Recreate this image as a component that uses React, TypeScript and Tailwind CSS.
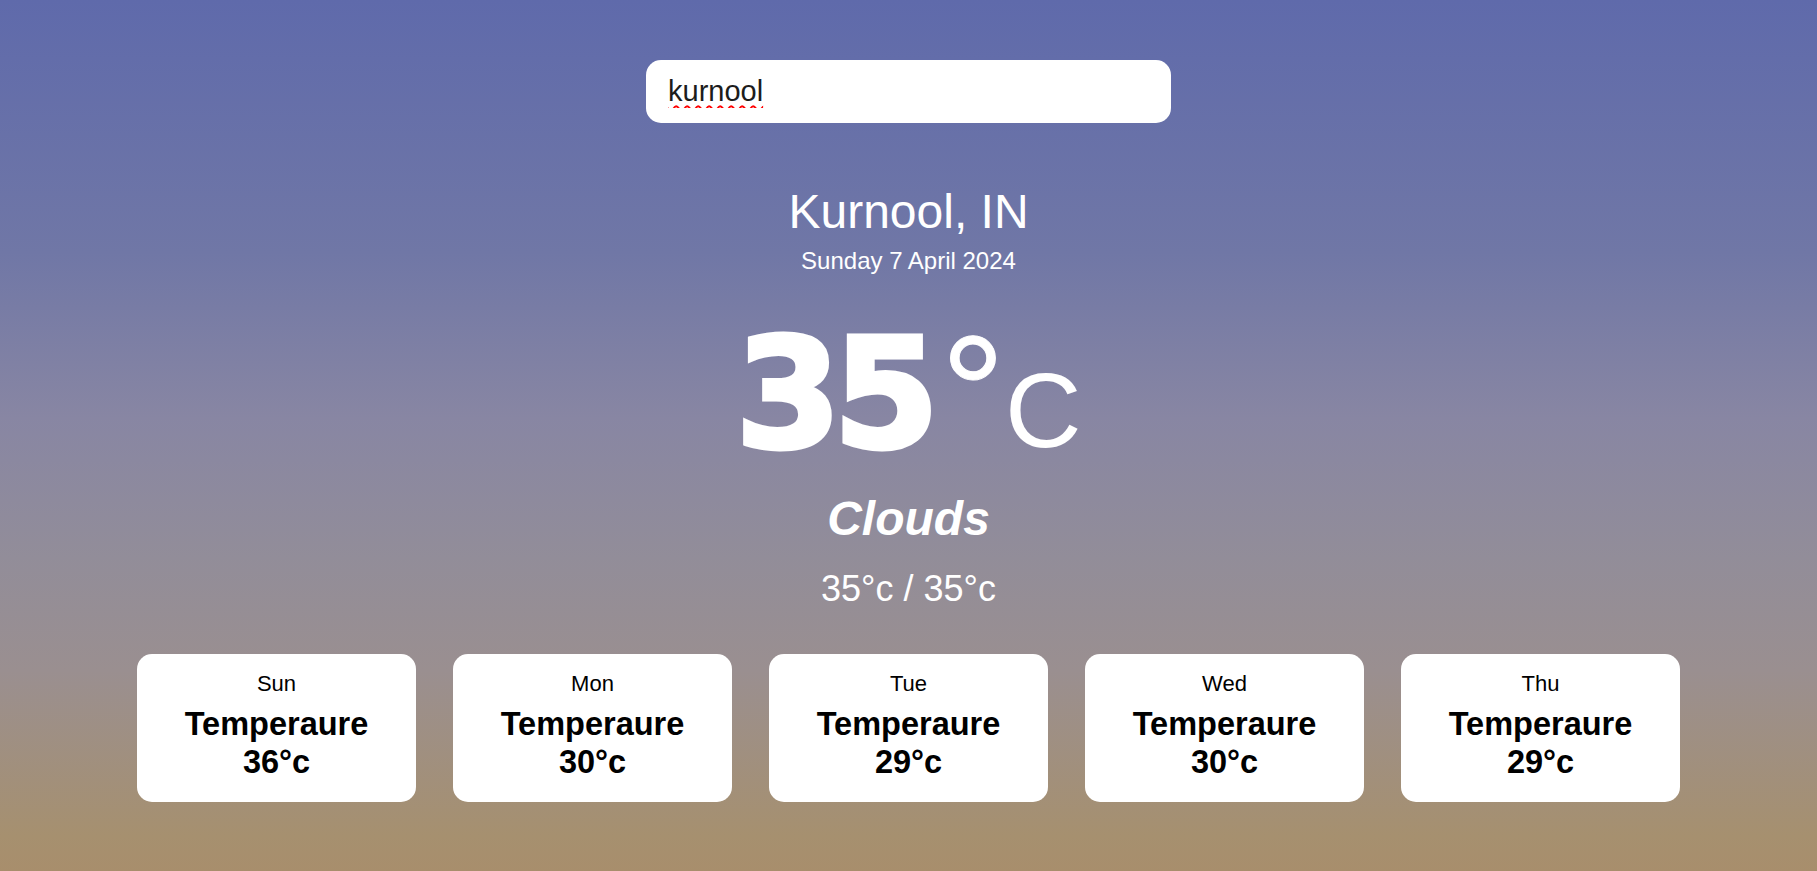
const forecast = [
  { day: "Sun", temp: 36 },
  { day: "Mon", temp: 30 },
  { day: "Tue", temp: 29 },
  { day: "Wed", temp: 30 },
  { day: "Thu", temp: 29 },
];

function ForecastCard({ day, temp }: { day: string; temp: number }) {
  return (
    <div className="flex h-[148px] w-[279px] flex-col items-center rounded-[15px] bg-white pt-[19px] text-black">
      <p className="text-[22px] leading-none">{day}</p>
      <p className="mt-[10px] text-center text-[32.5px] font-bold leading-[38px]">
        Temperaure
        <br />
        {temp}°c
      </p>
    </div>
  );
}

export default function App() {
  return (
    <div className="flex h-[871px] w-full flex-col items-center bg-[linear-gradient(180deg,#5f6aab_0%,#7077a6_29%,#8886a3_48%,#928d99_64%,#9a8f90_77%,#a6906f_96%,#a88e6c_100%)] pt-[60px] font-['Liberation_Sans',Arial,sans-serif] text-white">
      <input
        type="text"
        defaultValue="kurnool"
        className="h-[63px] w-[525px] rounded-[15px] bg-white px-[22px] text-[29px] text-[#1c1c1c] underline decoration-[#ff0000] decoration-wavy decoration-[1.5px] underline-offset-[4px] outline-none"
      />

      <h1 className="mt-[65px] text-[48px] leading-none">Kurnool, IN</h1>
      <p className="mt-[13px] text-[24px] leading-none">Sunday 7 April 2024</p>

      <div className="mt-[39px] flex items-baseline">
        <span className="font-['DejaVu_Sans',sans-serif] text-[152px] font-bold leading-none tracking-[-8px] [-webkit-text-stroke:5px_white]">35</span>
        <span className="ml-[10px] text-[160px] leading-none [-webkit-text-stroke:1px_white]">°</span>
        <span className="text-[106px] leading-none">C</span>
      </div>

      <p className="mt-[23px] text-[48px] font-bold italic leading-none">Clouds</p>
      <p className="mt-[28px] text-[36px] leading-none">35°c / 35°c</p>

      <div className="mt-[47px] flex gap-[37px]">
        {forecast.map((f) => (
          <ForecastCard key={f.day} day={f.day} temp={f.temp} />
        ))}
      </div>
    </div>
  );
}
